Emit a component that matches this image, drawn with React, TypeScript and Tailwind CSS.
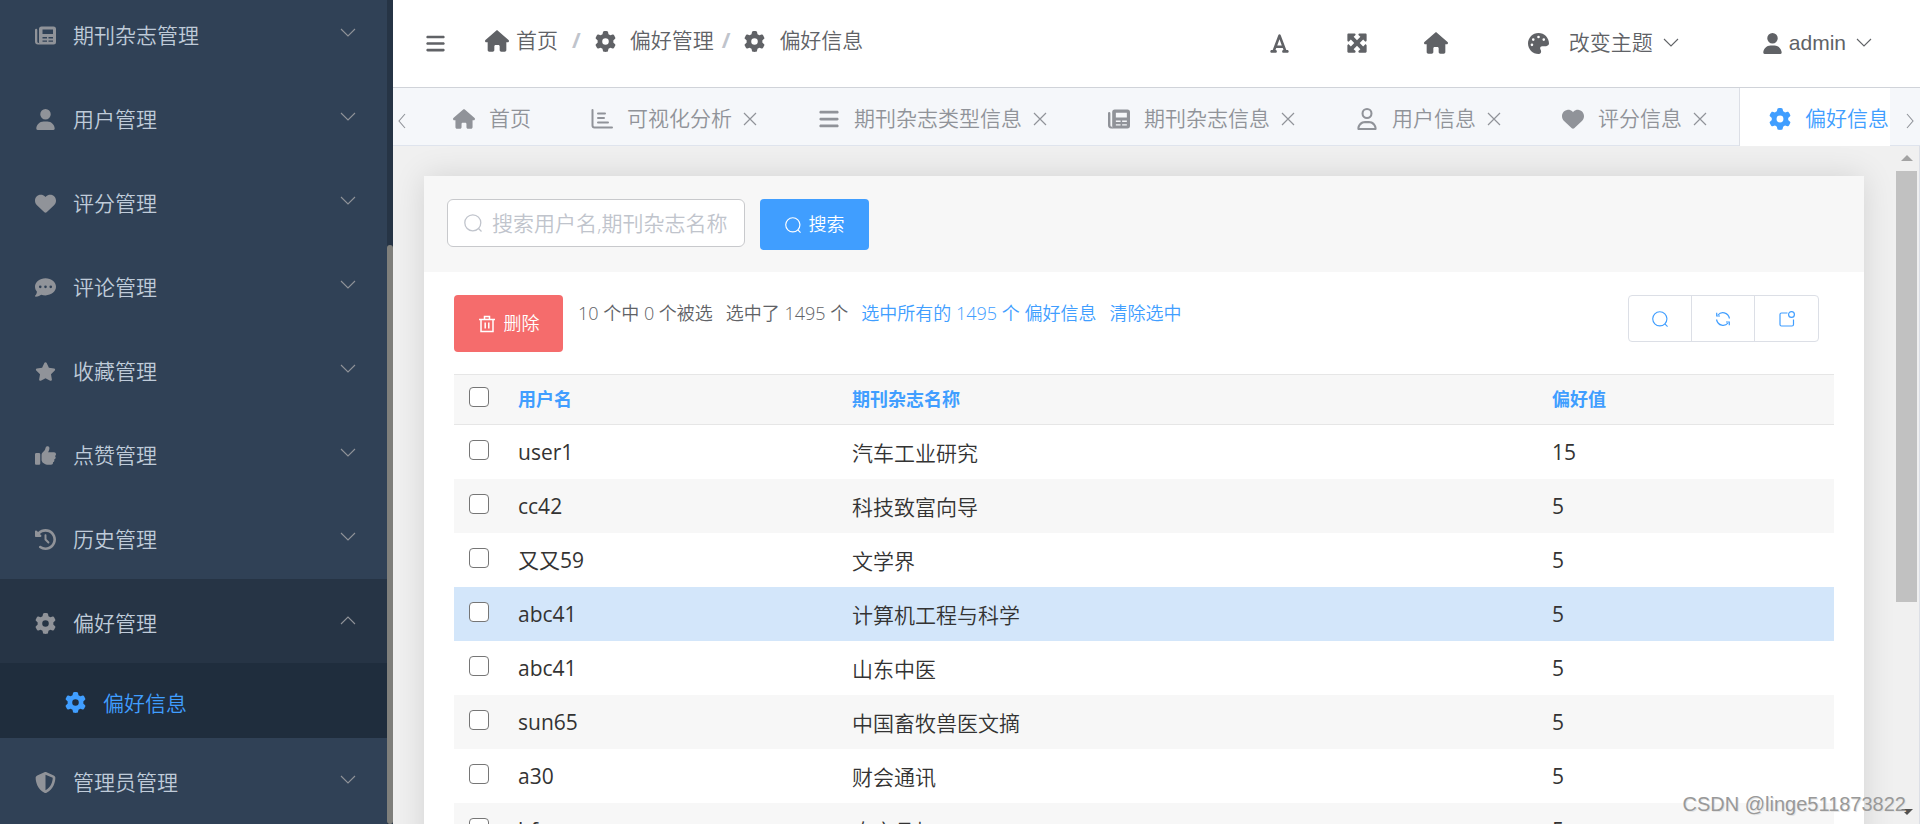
import type { ReactNode } from "react";
import type { IconType } from "react-icons";
import {
  FaBars,
  FaClockRotateLeft,
  FaCommentDots,
  FaFont,
  FaGear,
  FaHeart,
  FaHouse,
  FaMaximize,
  FaPalette,
  FaRegUser,
  FaShieldHalved,
  FaStar,
  FaThumbsUp,
  FaUser,
} from "react-icons/fa6";

const CHEVRONS = {
  down: "M1 4l7 7 7-7",
  up: "M1 11l7-7 7 7",
  left: "M11 1L5 8l6 7",
  right: "M5 1l6 7-6 7",
};

function Chevron({ to, className }: { to: keyof typeof CHEVRONS; className?: string }) {
  return (
    <svg viewBox="0 0 16 16" fill="none" stroke="currentColor" strokeWidth="1.1" className={className}>
      <path d={CHEVRONS[to]} />
    </svg>
  );
}

function CloseIcon() {
  return (
    <svg viewBox="0 0 14 14" fill="none" stroke="currentColor" strokeWidth="1.2" className="size-[14px]">
      <path d="M1 1l12 12M13 1L1 13" />
    </svg>
  );
}

function SearchIcon({ className }: { className?: string }) {
  return (
    <svg viewBox="0 0 18 18" fill="none" stroke="currentColor" strokeWidth="1.3" className={className}>
      <circle cx="8.8" cy="8.8" r="8" />
      <path d="M14.5 14.5l3 3" />
    </svg>
  );
}

function TrashIcon() {
  return (
    <svg viewBox="0 0 18 18" fill="none" stroke="currentColor" strokeWidth="1.5" className="size-[18px]">
      <path d="M1 4.500h16M6.500 4.500v-3h5v3M3 4.500v12h12v-12M7.200 7.500v6M10.800 7.500v6" />
    </svg>
  );
}

function RefreshIcon() {
  return (
    <svg viewBox="0 0 16 16" fill="none" stroke="currentColor" strokeWidth="1.2" className="size-4">
      <path d="M3 4C6 .2 13 .8 14.500 7.500M1.700 1.800v3.200H5M13 12C10 15.800 3 15.200 1.500 8.500M14.300 14.200V11H11" />
    </svg>
  );
}

function OptionsIcon() {
  return (
    <svg viewBox="0 0 16 16" fill="none" stroke="currentColor" strokeWidth="1.2" className="size-4">
      <path d="M8.500 2H2.500Q1 2 1 3.500v10Q1 15 2.500 15h10.500Q14.500 15 14.500 13.500V8.500" />
      <circle cx="12.500" cy="3.500" r="2.900" />
    </svg>
  );
}

function ChartIcon({ className }: { className?: string }) {
  return (
    <svg viewBox="0 0 22 20" fill="none" stroke="currentColor" strokeWidth="2" strokeLinecap="round" className={className}>
      <path d="M1.500 1v15.500q0 2 2 2H21M7 4.500h7M7 9h6M7 13.500h10" />
    </svg>
  );
}

function JournalIcon({ className }: { className?: string }) {
  return (
    <svg viewBox="0 0 21 19" fill="currentColor" className={className}>
      <path
        fillRule="evenodd"
        d="M6.500 .5h12Q21 .5 21 3v13q0 2.500-2.500 2.500h-14Q4 18 4 16V3Q4 .5 6.500 .5zM7.500 3.500v4.500h10.500V3.500zM7.500 11v1.400h4.500V11zM13.500 11v1.400H18V11zM7.500 14.400v1.400h4.500v-1.400zM13.500 14.400v1.400H18v-1.400z"
      />
      <path d="M1.200 2.800q1.100 0 1.100 1.200v11.500q0 1.500 1.700 1.500l.8 1.500H3Q0 18.500 0 15.500V4q0-1.200 1.200-1.200z" />
    </svg>
  );
}

type Icon = IconType | ((props: { className?: string }) => ReactNode);

const MENU: { label: string; icon: Icon; children?: { label: string; icon: Icon }[] }[] = [
  { label: "期刊杂志管理", icon: JournalIcon },
  { label: "用户管理", icon: FaUser },
  { label: "评分管理", icon: FaHeart },
  { label: "评论管理", icon: FaCommentDots },
  { label: "收藏管理", icon: FaStar },
  { label: "点赞管理", icon: FaThumbsUp },
  { label: "历史管理", icon: FaClockRotateLeft },
  { label: "偏好管理", icon: FaGear, children: [{ label: "偏好信息", icon: FaGear }] },
  { label: "管理员管理", icon: FaShieldHalved },
];

const TABS: { label: string; icon: Icon; fixed?: boolean; active?: boolean }[] = [
  { label: "首页", icon: FaHouse, fixed: true },
  { label: "可视化分析", icon: ChartIcon },
  { label: "期刊杂志类型信息", icon: FaBars },
  { label: "期刊杂志信息", icon: JournalIcon },
  { label: "用户信息", icon: FaRegUser },
  { label: "评分信息", icon: FaHeart },
  { label: "偏好信息", icon: FaGear, active: true },
];

const ROWS = [
  { user: "user1", journal: "汽车工业研究", value: 15 },
  { user: "cc42", journal: "科技致富向导", value: 5 },
  { user: "又又59", journal: "文学界", value: 5 },
  { user: "abc41", journal: "计算机工程与科学", value: 5, hovered: true },
  { user: "abc41", journal: "山东中医", value: 5 },
  { user: "sun65", journal: "中国畜牧兽医文摘", value: 5 },
  { user: "a30", journal: "财会通讯", value: 5 },
  { user: "bf", journal: "农产品加工", value: 5 },
];

function Sidebar() {
  return (
    <aside className="flex w-[393px] shrink-0 bg-[#304156]">
      <nav className="min-w-0 flex-1 overflow-hidden text-[21px] text-[#bfcbd9]">
        <ul className="-mt-[9px]">
          {MENU.map((item) => (
            <li key={item.label}>
              <button
                type="button"
                className={`flex h-[84px] w-full items-center pl-[35px] pr-[31px] pt-1 text-left ${item.children ? "bg-[#263445]" : ""}`}
              >
                <item.icon className="size-[21px] text-[#909399]" />
                <span className="ml-[17px] flex-1 pt-0.5">{item.label}</span>
                <Chevron to={item.children ? "up" : "down"} className="mb-1 size-4 text-[#909399]" />
              </button>
              {item.children?.map((child) => (
                <a
                  key={child.label}
                  href="#preference"
                  className="flex h-[75px] items-center bg-[#1f2d3d] pl-[65px] pt-1 text-[#409eff]"
                >
                  <child.icon className="size-[21px]" />
                  <span className="ml-[17px] pt-0.5">{child.label}</span>
                </a>
              ))}
            </li>
          ))}
        </ul>
      </nav>
      <div className="w-1.5 bg-[#263445] pt-[245px]">
        <div className="h-full rounded-full bg-[#7f7f7b]" />
      </div>
    </aside>
  );
}

function Header() {
  return (
    <header className="flex h-[87px] shrink-0 items-center bg-white pb-px pl-8 pr-12 text-[21px] text-[#606266]">
      <button type="button" aria-label="折叠菜单">
        <FaBars className="size-[21px]" />
      </button>
      <nav className="mb-1 ml-[39px] flex items-center">
        <a href="#home" className="flex items-center gap-[7px]">
          <FaHouse className="size-6" />
          首页
        </a>
        <span className="mx-3.5 font-bold text-[#c0c4cc]">/</span>
        <a href="#manage" className="flex items-center gap-3.5">
          <FaGear className="size-[21px]" />
          偏好管理
        </a>
        <span className="ml-2 mr-3.5 font-bold text-[#c0c4cc]">/</span>
        <span className="flex items-center gap-3.5">
          <FaGear className="size-[21px]" />
          偏好信息
        </span>
      </nav>
      <div className="ml-auto flex items-center">
        <button type="button" aria-label="字体">
          <FaFont className="size-[21px]" />
        </button>
        <button type="button" aria-label="全屏" className="ml-14">
          <FaMaximize className="size-[22px]" />
        </button>
        <button type="button" aria-label="首页" className="ml-14">
          <FaHouse className="size-6" />
        </button>
        <button type="button" className="ml-20 flex items-center">
          <FaPalette className="size-[21px]" />
          <span className="ml-5 mr-2.5">改变主题</span>
          <Chevron to="down" className="size-4" />
        </button>
        <button type="button" className="ml-[83px] flex items-center">
          <FaUser className="size-[21px]" />
          <span className="ml-1.5 mr-2.5 font-['Liberation_Sans',sans-serif]">admin</span>
          <Chevron to="down" className="size-4" />
        </button>
      </div>
    </header>
  );
}

function TabBar() {
  return (
    <div className="flex h-[59px] shrink-0 border-y border-t-[#d0d3d9] border-b-[#dfe4ed] bg-[#f5f7fa] text-[21px] text-[#909399]">
      <button type="button" aria-label="向左" className="flex w-[31px] shrink-0 items-center pl-px pt-2">
        <Chevron to="left" className="size-4" />
      </button>
      <div className="-mb-px flex min-w-0 flex-1 overflow-hidden">
        {TABS.map((tab) => (
          <div
            key={tab.label}
            className={`flex shrink-0 items-center whitespace-nowrap pl-[29px] pt-1 ${tab.fixed ? "pr-[31px]" : "pr-8"} ${
              tab.active ? "border-l border-[#dcdfe6] bg-white text-[#409eff]" : ""
            }`}
          >
            <a href="#tab" className="flex items-center gap-[14px]">
              <tab.icon className="size-[22px]" />
              {tab.label}
            </a>
            {!tab.fixed && (
              <button type="button" aria-label="关闭" className="ml-[11px]">
                <CloseIcon />
              </button>
            )}
          </div>
        ))}
      </div>
      <button type="button" aria-label="向右" className="flex w-[30px] shrink-0 items-center justify-end pr-0.5 pt-2">
        <Chevron to="right" className="size-4" />
      </button>
    </div>
  );
}

function Toolbar() {
  const tool = "flex h-full w-[63px] items-center justify-center";
  return (
    <div className="flex items-start px-[30px] pt-[23px] text-[18px] text-[#606266]">
      <button
        type="button"
        className="flex h-[57px] w-[109px] items-center justify-center gap-2 rounded bg-[#f56c6c] text-white"
      >
        <TrashIcon />
        删除
      </button>
      <p className="ml-[15px] mt-1 flex gap-[13px] leading-7">
        <span>10 个中 0 个被选</span>
        <span>选中了 1495 个</span>
        <a href="#all" className="text-[#409eff]">选中所有的 1495 个 偏好信息</a>
        <a href="#clear" className="text-[#409eff]">清除选中</a>
      </p>
      <div className="ml-auto mr-[15px] flex h-[47px] divide-x divide-[#dcdfe6] rounded border border-[#dcdfe6] text-[#409eff]">
        <button type="button" aria-label="搜索" className={tool}>
          <SearchIcon className="size-4" />
        </button>
        <button type="button" aria-label="刷新" className={tool}>
          <RefreshIcon />
        </button>
        <button type="button" aria-label="选项" className={tool}>
          <OptionsIcon />
        </button>
      </div>
    </div>
  );
}

function DataTable() {
  const box = "block size-5 appearance-none rounded border border-[#767676] bg-white checked:bg-[#409eff]";
  return (
    <div className="px-[30px] pt-[22px]">
      <table className="w-full table-fixed text-left text-[21px] text-[#333]">
        <colgroup>
          <col className="w-[50px]" />
          <col className="w-[334px]" />
          <col className="w-[700px]" />
          <col />
        </colgroup>
        <thead>
          <tr className="h-[50px] border-y border-[#e6e6e6] bg-[#f7f7f7] text-[18px] text-[#409eff]">
            <th className="pb-1.5 pl-[15px]">
              <input type="checkbox" aria-label="全选" className={box} />
            </th>
            <th className="pl-[14px]">用户名</th>
            <th className="pl-[14px]">期刊杂志名称</th>
            <th className="pl-[14px]">偏好值</th>
          </tr>
        </thead>
        <tbody>
          {ROWS.map((row) => (
            <tr
              key={row.journal}
              className={`h-[54px] ${row.hovered ? "bg-[#d3e6fa]" : "even:bg-[#f7f7f7]"}`}
            >
              <td className="pb-1 pl-[15px]">
                <input type="checkbox" aria-label={row.journal} className={box} />
              </td>
              <td className="pl-[14px] pt-0.5 font-normal">{row.user}</td>
              <td className="pl-[14px] pt-1">{row.journal}</td>
              <td className="pl-[14px] pt-0.5 font-normal">{row.value}</td>
            </tr>
          ))}
        </tbody>
      </table>
    </div>
  );
}

export default function App() {
  return (
    <div className="relative flex h-screen overflow-hidden bg-[#f0f0f0] font-['Open_Sans','Noto_Sans_CJK_SC',sans-serif] font-[350] leading-normal">
      <Sidebar />
      <main className="flex min-w-0 flex-1 flex-col">
        <Header />
        <TabBar />
        <div className="flex min-h-0 flex-1">
          <div className="min-w-0 flex-1 overflow-hidden pl-[31px] pr-8 pt-[30px]">
            <section className="min-h-full bg-white shadow-[0_0_30px_rgba(0,0,0,0.12)]">
              <form className="flex h-24 items-start bg-[#f7f7f7] pl-[23px] pt-[23px]" onSubmit={(e) => e.preventDefault()}>
                <label className="flex h-12 w-[298px] items-center rounded-md border border-[#c8c9cc] bg-white pl-4 text-[#c0c4cc]">
                  <SearchIcon className="size-[18px] shrink-0" />
                  <input
                    type="text"
                    aria-label="搜索"
                    placeholder="搜索用户名,期刊杂志名称"
                    className="ml-2.5 min-w-0 flex-1 pt-0.5 text-[21px] text-[#606266] outline-none placeholder:text-[#c0c4cc]"
                  />
                </label>
                <button
                  type="submit"
                  className="ml-[15px] flex h-[51px] w-[109px] items-center justify-center gap-2 rounded bg-[#409eff] text-[18px] text-white"
                >
                  <SearchIcon className="size-4" />
                  搜索
                </button>
              </form>
              <Toolbar />
              <DataTable />
            </section>
          </div>
          <div className="flex w-6 shrink-0 flex-col items-center justify-between border-r border-[#dcdfe6] py-[9px] pr-0.5">
            <svg viewBox="0 0 12 6" fill="#a3a3a3" className="h-1.5 w-3">
              <path d="M0 6l6-6 6 6z" />
            </svg>
            <div className="mb-auto mt-2.5 h-[431px] w-[21px] bg-[#c1c1c1]" />
            <svg viewBox="0 0 12 6" fill="#505050" className="h-1.5 w-3">
              <path d="M0 0l6 6 6-6z" />
            </svg>
          </div>
        </div>
      </main>
      <p className="absolute bottom-[5px] right-[14px] font-['Liberation_Sans',sans-serif] text-[20px] text-[#999] [text-shadow:1px_1px_0_#e4e4e4]">
        CSDN @linge511873822
      </p>
    </div>
  );
}
